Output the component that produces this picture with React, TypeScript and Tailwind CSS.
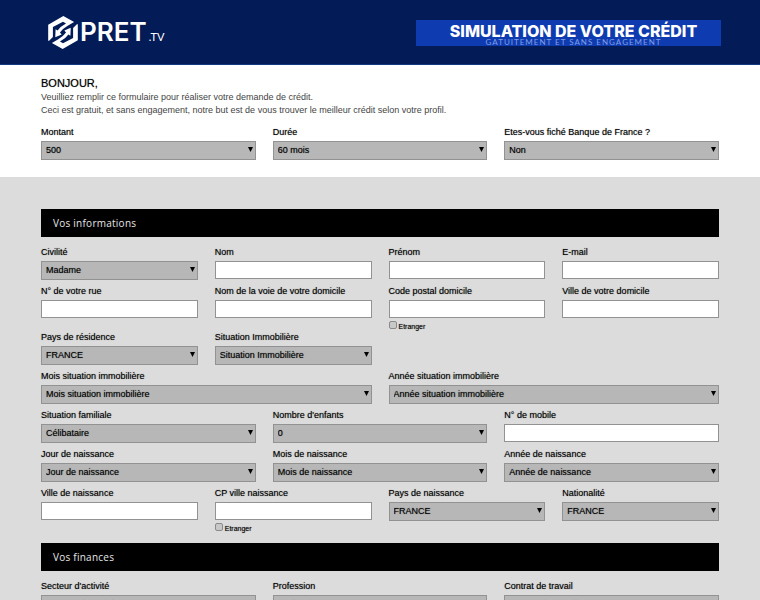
import { useId } from "react";
import type { ReactNode } from "react";

type FieldProps = {
  label: string;
  className?: string;
  // a value makes the field a drop-down, otherwise it is a text box
  value?: string;
  abroad?: boolean;
};

function Field({ label, className = "col-span-3", value, abroad }: FieldProps) {
  const id = useId();

  return (
    <div className={`min-w-0 ${className}`}>
      <label
        htmlFor={id}
        className="block h-[17px] text-[9px] leading-[17px] text-black [text-shadow:0_0_1px_#00000080]"
      >
        {label}
      </label>
      {value !== undefined ? (
        <div className="relative">
          <select
            id={id}
            className="block h-[19px] w-full appearance-none border border-[#929292] bg-[#b7b7b7] pr-4 pl-1 text-[9px] text-black [text-shadow:0_0_1px_#00000080]"
          >
            <option>{value}</option>
          </select>
          <svg
            className="pointer-events-none absolute top-[6px] right-[3px] h-[5px] w-[5px]"
            viewBox="0 0 5 5"
            aria-hidden="true"
          >
            <path d="M0 0h5L2.5 5z" fill="#000" />
          </svg>
        </div>
      ) : (
        <input
          id={id}
          type="text"
          className="block h-[18px] w-full border border-[#929292] bg-white px-1 text-[9px] text-black"
        />
      )}
      {abroad && (
        <label className="mt-[3px] -mb-[3px] flex h-2 items-start gap-[2px] text-[7px] leading-[12px] text-black [text-shadow:0_0_1px_#00000080]">
          <input
            type="checkbox"
            className="h-2 w-2 appearance-none rounded-[2px] border border-[#8a8a8a] bg-[#c8c8c8] checked:bg-[#555]"
          />
          Etranger
        </label>
      )}
    </div>
  );
}

function Row({ children }: { children: ReactNode }) {
  return <div className="mb-[3px] grid grid-cols-12 gap-x-[17px]">{children}</div>;
}

function SectionTitle({ children }: { children: ReactNode }) {
  return (
    <h2 className="mb-[7px] h-7 bg-black pl-3 font-['Open_Sans',sans-serif] text-[10px] leading-7 font-normal tracking-wide text-[#e6e6e6]">
      {children}
    </h2>
  );
}

// one of the two interlocking arrows of the hexagon
const LOGO_HALF =
  "M45 0 L77 18 L58 29 Q45 36 35 49 L40 55 L21 63 L22 39 L28 43 Q37 30 53 22 L44 17 L14 33 L14 62 L2 74 L0 73 L0 26 Z";

function Logo() {
  return (
    <a href="#" aria-label="Pret.tv" className="flex items-center text-white">
      <svg className="h-[33px] w-[30px]" viewBox="0 0 88 98" aria-hidden="true">
        <path d={LOGO_HALF} fill="#fff" />
        <path d={LOGO_HALF} fill="#fff" transform="rotate(180 44 49)" />
      </svg>
      <span className="ml-[2px] font-['Inter',sans-serif] text-[26px] leading-none font-semibold">PRET</span>
      <span className="mt-2 ml-[2px] font-['Lato',sans-serif] text-[11px] leading-none">.TV</span>
    </a>
  );
}

export default function App() {
  return (
    <div className="min-h-screen bg-[#dcdcdc] font-['Liberation_Sans',Arial,sans-serif]">
      <header className="flex h-[65px] items-center justify-between border-b border-[#123a80] bg-[#031b57] pr-[39px] pl-12">
        <Logo />
        <div className="mt-[2px] flex h-[26px] w-[305px] flex-col items-center justify-end bg-[#0f3bb0] pl-[10px]">
          <p className="font-['Inter',sans-serif] text-[16px] leading-[14px] font-extrabold text-white">
            SIMULATION DE VOTRE CRÉDIT
          </p>
          <p className="font-['Lato',sans-serif] text-[8px] leading-[8px] tracking-[1px] text-[#7f9fe6]">
            GATUITEMENT ET SANS ENGAGEMENT
          </p>
        </div>
      </header>

      <form>
        <section className="bg-white px-[41px] pt-[10px] pb-[17px]">
          <h1 className="text-[11px] leading-[16px] text-black [text-shadow:0_0_1px_#00000080]">BONJOUR,</h1>
          <p className="mb-[7px] text-[9px] leading-[13px] text-[#444]">
            Veuilliez remplir ce formulaire pour réaliser votre demande de crédit.
            <br />
            Ceci est gratuit, et sans engagement, notre but est de vous trouver le meilleur crédit selon votre profil.
          </p>
          <div className="grid grid-cols-12 gap-x-[17px]">
            <Field label="Montant" value="500" className="col-span-4" />
            <Field label="Durée" value="60 mois" className="col-span-4" />
            <Field label="Etes-vous fiché Banque de France ?" value="Non" className="col-span-4" />
          </div>
        </section>

        <section className="px-[41px] pt-8">
          <SectionTitle>Vos informations</SectionTitle>
          <Row>
            <Field label="Civilité" value="Madame" />
            <Field label="Nom" />
            <Field label="Prénom" />
            <Field label="E-mail" />
          </Row>
          <Row>
            <Field label="N° de votre rue" />
            <Field label="Nom de la voie de votre domicile" />
            <Field label="Code postal domicile" abroad />
            <Field label="Ville de votre domicile" />
          </Row>
          <Row>
            <Field label="Pays de résidence" value="FRANCE" />
            <Field label="Situation Immobilière" value="Situation Immobilière" />
          </Row>
          <Row>
            <Field label="Mois situation immobilière" value="Mois situation immobilière" className="col-span-6" />
            <Field label="Année situation immobilière" value="Année situation immobilière" className="col-span-6" />
          </Row>
          <Row>
            <Field label="Situation familiale" value="Célibataire" className="col-span-4" />
            <Field label="Nombre d'enfants" value="0" className="col-span-4" />
            <Field label="N° de mobile" className="col-span-4" />
          </Row>
          <Row>
            <Field label="Jour de naissance" value="Jour de naissance" className="col-span-4" />
            <Field label="Mois de naissance" value="Mois de naissance" className="col-span-4" />
            <Field label="Année de naissance" value="Année de naissance" className="col-span-4" />
          </Row>
          <Row>
            <Field label="Ville de naissance" />
            <Field label="CP ville naissance" abroad />
            <Field label="Pays de naissance" value="FRANCE" />
            <Field label="Nationalité" value="FRANCE" />
          </Row>
        </section>

        <section className="px-[41px] pt-3">
          <SectionTitle>Vos finances</SectionTitle>
          <Row>
            <Field label="Secteur d'activité" value="Secteur d'activité" className="col-span-4" />
            <Field label="Profession" value="Profession" className="col-span-4" />
            <Field label="Contrat de travail" value="Contrat de travail" className="col-span-4" />
          </Row>
        </section>
      </form>
    </div>
  );
}
